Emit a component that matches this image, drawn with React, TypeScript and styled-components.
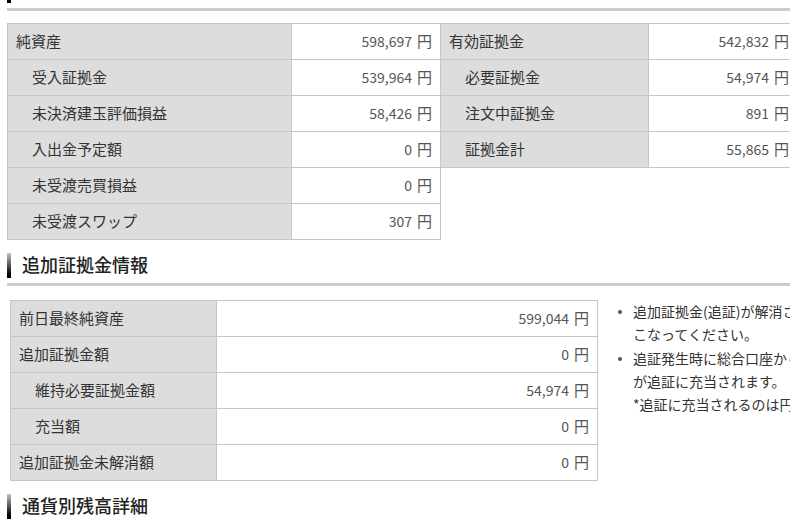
import React from "react";
import styled, { createGlobalStyle } from "styled-components";

type Row = { label: string; value: string; indent?: boolean };

const balanceLeft: Row[] = [
    { label: "純資産", value: "598,697" },
    { label: "受入証拠金", value: "539,964", indent: true },
    { label: "未決済建玉評価損益", value: "58,426", indent: true },
    { label: "入出金予定額", value: "0", indent: true },
    { label: "未受渡売買損益", value: "0", indent: true },
    { label: "未受渡スワップ", value: "307", indent: true },
];

const balanceRight: Row[] = [
    { label: "有効証拠金", value: "542,832" },
    { label: "必要証拠金", value: "54,974", indent: true },
    { label: "注文中証拠金", value: "891", indent: true },
    { label: "証拠金計", value: "55,865", indent: true },
];

const marginCall: Row[] = [
    { label: "前日最終純資産", value: "599,044" },
    { label: "追加証拠金額", value: "0" },
    { label: "維持必要証拠金額", value: "54,974", indent: true },
    { label: "充当額", value: "0", indent: true },
    { label: "追加証拠金未解消額", value: "0" },
];

const notes: string[][] = [
    ["追加証拠金(追証)が解消されない場合は、ご入金または建玉の決済をお", "こなってください。"],
    [
        "追証発生時に総合口座から自動で振替が行われ、振替後の総合口座の残高",
        "が追証に充当されます。",
        "*追証に充当されるのは円の残高のみです。",
    ],
];

const DataGrid = ({ rows, columns, $noLeft }: { rows: Row[]; columns: string; $noLeft?: boolean }) => (
    <Grid $columns={columns} $noLeft={$noLeft}>
        {rows.map(row => (
            <React.Fragment key={row.label}>
                <LabelCell $indent={row.indent}>{row.label}</LabelCell>
                <ValueCell>
                    {row.value}
                    <Unit>円</Unit>
                </ValueCell>
            </React.Fragment>
        ))}
    </Grid>
);

const SectionHeading = ({ title, $first }: { title?: string; $first?: boolean }) => (
    <Heading $first={$first}>
        <HeadingBar />
        {title && <HeadingText>{title}</HeadingText>}
    </Heading>
);

export default function App() {
    return (
        <Page>
            <GlobalStyle />
            <SectionHeading $first />
            <BalanceRow>
                <DataGrid rows={balanceLeft} columns="284px 149px" />
                <DataGrid rows={balanceRight} columns="208px 149px" $noLeft />
            </BalanceRow>

            <SectionHeading title="追加証拠金情報" />
            <MarginRow>
                <DataGrid rows={marginCall} columns="206px 381px" />
                <NoteList>
                    {notes.map((lines, i) => (
                        <NoteItem key={i}>
                            <Bullet />
                            <NoteText>
                                {lines.map(line => (
                                    <div key={line}>{line}</div>
                                ))}
                            </NoteText>
                        </NoteItem>
                    ))}
                </NoteList>
            </MarginRow>

            <SectionHeading title="通貨別残高詳細" />
        </Page>
    );
}

const GlobalStyle = createGlobalStyle`
    html, body {
        margin: 0;
        padding: 0;
        background: #fff;
        overflow: hidden;
    }
    body {
        font-family: "Noto Sans CJK JP", "Noto Sans", sans-serif;
        color: #333;
    }
`;

const Page = styled.div`
    width: 790px;
    height: 521px;
    overflow: hidden;
    padding-left: 7px;
    box-sizing: border-box;
`;

const Heading = styled.div<{ $first?: boolean }>`
    display: flex;
    align-items: flex-start;
    gap: 11px;
    height: 25px;
    margin-top: ${props => (props.$first ? "-22px" : "13px")};
    padding-bottom: 5px;
    border-bottom: 3px solid #cccccc;
    width: 800px;
`;

const HeadingBar = styled.span`
    width: 4px;
    height: 25px;
    background: linear-gradient(#c4c4c4, #000 85%);
    flex: none;
`;

const HeadingText = styled.h2`
    margin: 0;
    font-size: 18px;
    font-weight: 500;
    line-height: 23px;
    color: #222;
`;

const BalanceRow = styled.div`
    display: flex;
    align-items: flex-start;
    margin-top: 12px;
`;

const MarginRow = styled.div`
    display: flex;
    align-items: flex-start;
    margin-top: 14px;
    padding-left: 3px;
`;

const Grid = styled.div<{ $columns: string; $noLeft?: boolean }>`
    display: grid;
    grid-template-columns: ${props => props.$columns};
    grid-auto-rows: 36px;
    border-top: 1px solid #c6c6c6;
    border-left: ${props => (props.$noLeft ? "none" : "1px solid #c6c6c6")};
    flex: none;
`;

const CellBase = styled.div`
    display: flex;
    align-items: center;
    box-sizing: border-box;
    padding-bottom: 2px;
    border-right: 1px solid #c6c6c6;
    border-bottom: 1px solid #c6c6c6;
    font-size: 15px;
    white-space: nowrap;
`;

const LabelCell = styled(CellBase)<{ $indent?: boolean }>`
    background: #dddddd;
    padding-left: ${props => (props.$indent ? "24px" : "8px")};
    color: #333;
`;

const ValueCell = styled(CellBase)`
    justify-content: flex-end;
    padding-right: 8px;
    background: #fff;
    color: #555;
    font-size: 14px;
`;

const Unit = styled.span`
    margin-left: 5px;
    font-size: 15px;
`;

const NoteList = styled.div`
    display: flex;
    flex-direction: column;
    gap: 1px;
    margin-left: 20px;
    font-size: 14px;
    line-height: 23px;
    color: #333;
`;

const NoteItem = styled.div`
    display: flex;
    align-items: flex-start;
`;

const Bullet = styled.span`
    width: 4px;
    height: 4px;
    border-radius: 50%;
    background: #555;
    margin-top: 10px;
    margin-right: 11px;
    flex: none;
`;

const NoteText = styled.div`
    white-space: nowrap;
`;
